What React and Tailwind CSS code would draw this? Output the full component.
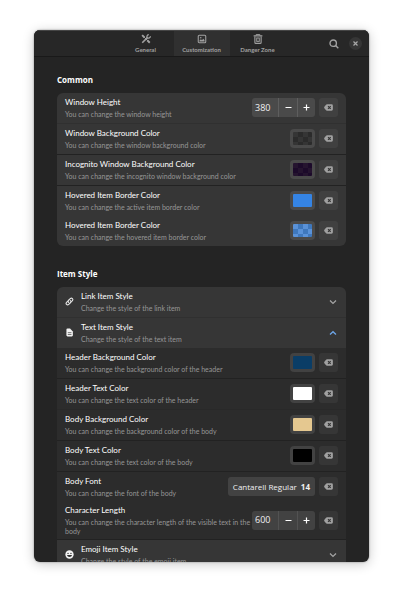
import React, { useState } from 'react';

const CHECKER_GRAY =
  'bg-[conic-gradient(#2b2b2b_25%,#353535_0_50%,#2b2b2b_0_75%,#353535_0)] bg-[length:10px_10px]';
const CHECKER_PURPLE =
  'bg-[conic-gradient(#1c0a2a_25%,#25142f_0_50%,#1c0a2a_0_75%,#25142f_0)] bg-[length:10px_10px]';
const CHECKER_BLUE =
  'bg-[conic-gradient(#3f78bd_25%,#5a92d8_0_50%,#3f78bd_0_75%,#5a92d8_0)] bg-[length:10px_10px]';

function ToolsIcon() {
  return (
    <svg width="10" height="10" viewBox="0 0 16 16" fill="none" stroke="#a0a0a0" aria-hidden="true">
      <path d="M1.8 1.8 L5.6 5.6 M10 10 L14 14" strokeWidth="3" />
      <path d="M5 5 L10.5 10.5" strokeWidth="1.6" />
      <path d="M2 14 L10.5 5.5" strokeWidth="2.6" />
      <path d="M12.4 0.9 C10 1.2 8.8 3.6 9.8 6.2 C12.4 7.2 14.8 6 15.1 3.6" strokeWidth="2" />
    </svg>
  );
}

function PictureIcon() {
  return (
    <svg width="10" height="10" viewBox="0 0 16 16" fill="none" stroke="#a0a0a0" aria-hidden="true">
      <rect x="2" y="2" width="12" height="12" rx="1.6" strokeWidth="1.7" />
      <path d="M4 12 V10.5 L6.2 8.4 L8 10 L10 7.6 L12 10 V12 Z" fill="#a0a0a0" stroke="none" />
      <circle cx="6" cy="5.8" r="1.2" fill="#a0a0a0" stroke="none" />
    </svg>
  );
}

function TrashIcon() {
  return (
    <svg width="10" height="10" viewBox="0 0 16 16" fill="none" stroke="#a0a0a0" aria-hidden="true">
      <path d="M1 3 H15" strokeWidth="2" />
      <path d="M5 2.6 V1 H11 V2.6" strokeWidth="1.6" />
      <path d="M3 4 V13.5 Q3 15 4.5 15 H11.5 Q13 15 13 13.5 V4" strokeWidth="1.8" />
      <rect x="6" y="6.4" width="4" height="5.4" strokeWidth="1.6" />
    </svg>
  );
}

function LinkIcon() {
  return (
    <svg width="9" height="9" viewBox="0 0 16 16" fill="none" stroke="#e4e4e4" strokeWidth="2" strokeLinecap="round" aria-hidden="true">
      <path d="M6.4 9.6 C5 8.2 5.4 6.8 6.4 5.8 L9.4 2.9 C10.6 1.7 12.2 1.8 13.2 2.8 C14.2 3.8 14.3 5.4 13.1 6.6 L11.6 8.1" />
      <path d="M9.6 6.4 C11 7.8 10.6 9.2 9.6 10.2 L6.6 13.1 C5.4 14.3 3.8 14.2 2.8 13.2 C1.8 12.2 1.7 10.6 2.9 9.4 L4.4 7.9" />
    </svg>
  );
}

function DocumentIcon() {
  return (
    <svg width="9" height="9" viewBox="0 0 16 16" aria-hidden="true">
      <path d="M2.5 3 Q2.5 1 4.5 1 H9 L14 6 V13 Q14 15 12 15 H4.5 Q2.5 15 2.5 13 Z" fill="#f2f2f2" />
      <path d="M5 8.3 H11.5 M5 11.6 H11.5" stroke="#363636" strokeWidth="1.2" />
    </svg>
  );
}

function SmileIcon() {
  return (
    <svg width="9" height="9" viewBox="0 0 16 16" aria-hidden="true">
      <circle cx="8" cy="8" r="7.4" fill="#f2f2f2" />
      <circle cx="5.4" cy="6" r="1.2" fill="#303030" />
      <circle cx="10.6" cy="6" r="1.2" fill="#303030" />
      <path d="M3.6 9 H12.4 C12 11.4 10.2 12.4 8 12.4 C5.8 12.4 4 11.4 3.6 9 Z" fill="#303030" />
    </svg>
  );
}

function Chevron({ open }) {
  return (
    <svg className="mr-px" width="8" height="8" viewBox="0 0 8 8" fill="none" strokeWidth="1.3" aria-hidden="true">
      {open ? (
        <path d="M1 5.5 L4 2.7 L7 5.5" stroke="#6ea6e8" />
      ) : (
        <path d="M1 2.6 L4 5.4 L7 2.6" stroke="#a4a4a4" />
      )}
    </svg>
  );
}

function ResetButton({ nested, label }) {
  return (
    <button
      type="button"
      aria-label={`Reset ${label}`}
      className={`flex size-[19px] shrink-0 items-center justify-center rounded-[3px] ${nested ? 'bg-[#363636]' : 'bg-[#404040]'}`}
    >
      <svg width="9" height="7" viewBox="0 0 18 14" aria-hidden="true">
        <path d="M6 0.5 H15 Q17.8 0.5 17.8 3.3 V10.7 Q17.8 13.5 15 13.5 H6 Q4.8 13.5 4 12.7 L0.8 8.6 Q-0.3 7 0.8 5.4 L4 1.3 Q4.8 0.5 6 0.5 Z" fill="#a0a0a0" />
        <path d="M8 4.2 L13.4 9.8 M13.4 4.2 L8 9.8" stroke="#333" strokeWidth="2.2" />
      </svg>
    </button>
  );
}

function Swatch({ color, nested, label }) {
  return (
    <button
      type="button"
      aria-label={label}
      className={`flex h-[19px] w-[25px] shrink-0 items-center justify-center rounded-[4px] ${nested ? 'bg-[#424242]' : 'bg-[#4a4a4a]'}`}
    >
      <span className={`block h-[13px] w-[19px] rounded-[1px] ${color}`} />
    </button>
  );
}

function SpinButton({ initial, step, nested, label }) {
  const [value, setValue] = useState(initial);
  const line = nested ? 'border-[#525252]' : 'border-[#5e5e5e]';
  return (
    <div className={`flex h-[19px] shrink-0 overflow-hidden rounded-[3px] text-[#f0f0f0] ${nested ? 'bg-[#424242]' : 'bg-[#4a4a4a]'}`}>
      <input
        aria-label={label}
        value={value}
        onChange={(e) => setValue(Number(e.target.value) || 0)}
        className="w-[26px] bg-transparent pl-[3px] text-[9px] outline-none"
      />
      <button type="button" aria-label="Decrease" onClick={() => setValue(value - step)} className={`flex w-[19px] items-center justify-center border-l ${line}`}>
        <svg width="7" height="7" viewBox="0 0 7 7" stroke="#fff" strokeWidth="1.2" aria-hidden="true">
          <path d="M0.5 3.5 H6.5" />
        </svg>
      </button>
      <button type="button" aria-label="Increase" onClick={() => setValue(value + step)} className={`flex w-[18px] items-center justify-center border-l ${line}`}>
        <svg width="7" height="7" viewBox="0 0 7 7" stroke="#fff" strokeWidth="1.2" aria-hidden="true">
          <path d="M0.5 3.5 H6.5 M3.5 0.5 V6.5" />
        </svg>
      </button>
    </div>
  );
}

function RowText({ title, subtitle }) {
  return (
    <span className="block min-w-0 flex-1 text-left font-['Lato',sans-serif]">
      <span className="block text-[8px] leading-[12px] text-white">{title}</span>
      <span className="mt-[2px] block text-[7px] leading-[9px] text-[#969696]">{subtitle}</span>
    </span>
  );
}

const DIVIDERS = {
  strong: 'border-b border-[#222222]',
  soft: 'border-b border-[#303030]',
  faint: 'border-b border-[#292929]',
};

function SettingRow({ title, subtitle, nested, divider, compact, children }) {
  return (
    <li className={`flex items-center px-2 pt-[3px] ${compact ? 'pb-[3px]' : 'pb-[4px]'} ${nested ? 'bg-[#2c2c2c]' : 'bg-[#363636]'} ${divider ? DIVIDERS[divider] : ''}`}>
      <RowText title={title} subtitle={subtitle} />
      <div className="flex gap-1">
        {children}
        <ResetButton nested={nested} label={title} />
      </div>
    </li>
  );
}

function ExpanderRow({ icon, title, subtitle, open, divider }) {
  return (
    <li className={`bg-[#363636] ${divider ? DIVIDERS[divider] : ''}`}>
      <button type="button" aria-expanded={open} className="flex w-full items-center gap-[7px] px-2 pt-[3px] pb-[4px]">
        {icon}
        <RowText title={title} subtitle={subtitle} />
        <Chevron open={open} />
      </button>
    </li>
  );
}

function Tab({ icon, label, active }) {
  return (
    <button
      type="button"
      role="tab"
      aria-selected={active}
      className={`flex w-14 flex-col items-center gap-px pt-[3px] text-[#a0a0a0] ${active ? 'bg-[#303030]' : ''}`}
    >
      {icon}
      <span className="font-['Lato',sans-serif] text-[6px] leading-[9px] font-bold whitespace-nowrap">{label}</span>
    </button>
  );
}

function Heading({ children }) {
  return <h2 className="mb-[7px] text-[8px] leading-[12px] font-bold text-white">{children}</h2>;
}

export default function App() {
  return (
    <div className="flex h-screen flex-col bg-white px-[34px] pt-[30px] pb-[38px] font-['Open_Sans',sans-serif]">
      <main className="flex min-h-0 flex-1 flex-col overflow-hidden rounded-[6px] bg-[#242424] shadow-[0_2px_12px_rgba(0,0,0,0.22),0_0_2px_rgba(0,0,0,0.4)]">
        <header className="grid h-[27px] shrink-0 grid-cols-[1fr_auto_1fr] border-t border-b border-t-[#454545] border-b-[#191919] bg-[#272727]">
          <span />
          <div role="tablist" className="flex">
            <Tab icon={<ToolsIcon />} label="General" />
            <Tab icon={<PictureIcon />} label="Customization" active />
            <Tab icon={<TrashIcon />} label="Danger Zone" />
          </div>
          <div className="flex items-center justify-end gap-[10px] pr-[7px]">
            <button type="button" aria-label="Search">
              <svg width="10" height="10" viewBox="0 0 10 10" fill="none" stroke="#a0a0a0" strokeWidth="1.4" aria-hidden="true">
                <circle cx="4.2" cy="4.2" r="3.2" />
                <path d="M6.6 6.6 L9.3 9.3" />
              </svg>
            </button>
            <button type="button" aria-label="Close" className="flex size-[13px] items-center justify-center rounded-full bg-[#363636]">
              <svg width="5" height="5" viewBox="0 0 5 5" stroke="#a8a8a8" strokeWidth="1.2" aria-hidden="true">
                <path d="M0.5 0.5 L4.5 4.5 M4.5 0.5 L0.5 4.5" />
              </svg>
            </button>
          </div>
        </header>

        <div className="min-h-0 flex-1 overflow-hidden px-[23px] pt-[17px]">
          <section>
            <Heading>Common</Heading>
            <ul className="overflow-hidden rounded-[6px]">
              <SettingRow title="Window Height" subtitle="You can change the window height" divider="soft">
                <SpinButton initial={380} step={10} label="Window Height" />
              </SettingRow>
              <SettingRow title="Window Background Color" subtitle="You can change the window background color" divider="strong">
                <Swatch color={CHECKER_GRAY} label="Window Background Color" />
              </SettingRow>
              <SettingRow title="Incognito Window Background Color" subtitle="You can change the incognito window background color" divider="strong">
                <Swatch color={CHECKER_PURPLE} label="Incognito Window Background Color" />
              </SettingRow>
              <SettingRow title="Hovered Item Border Color" subtitle="You can change the active item border color">
                <Swatch color="bg-[#3584e4]" label="Active Item Border Color" />
              </SettingRow>
              <SettingRow title="Hovered Item Border Color" subtitle="You can change the hovered item border color">
                <Swatch color={CHECKER_BLUE} label="Hovered Item Border Color" />
              </SettingRow>
            </ul>
          </section>

          <section className="mt-[22px]">
            <Heading>Item Style</Heading>
            <ul className="overflow-hidden rounded-[6px]">
              <ExpanderRow icon={<LinkIcon />} title="Link Item Style" subtitle="Change the style of the link item" open={false} divider="soft" />
              <ExpanderRow icon={<DocumentIcon />} title="Text Item Style" subtitle="Change the style of the text item" open />
              <SettingRow nested title="Header Background Color" subtitle="You can change the background color of the header" divider="strong">
                <Swatch nested color="bg-[#0a3d66]" label="Header Background Color" />
              </SettingRow>
              <SettingRow nested title="Header Text Color" subtitle="You can change the text color of the header" divider="faint">
                <Swatch nested color="bg-white" label="Header Text Color" />
              </SettingRow>
              <SettingRow nested title="Body Background Color" subtitle="You can change the background color of the body" divider="strong">
                <Swatch nested color="bg-[#e5c890]" label="Body Background Color" />
              </SettingRow>
              <SettingRow nested title="Body Text Color" subtitle="You can change the text color of the body" divider="strong">
                <Swatch nested color="bg-black" label="Body Text Color" />
              </SettingRow>
              <SettingRow nested compact title="Body Font" subtitle="You can change the font of the body">
                <button type="button" className="flex h-[19px] shrink-0 items-center gap-[4px] rounded-[3px] bg-[#424242] px-[5px] text-[8px] text-[#f0f0f0]">
                  <span>Cantarell Regular</span>
                  <span className="font-bold">14</span>
                </button>
              </SettingRow>
              <SettingRow nested compact title="Character Length" subtitle="You can change the character length of the visible text in the body" divider="strong">
                <SpinButton nested initial={600} step={10} label="Character Length" />
              </SettingRow>
              <ExpanderRow icon={<SmileIcon />} title="Emoji Item Style" subtitle="Change the style of the emoji item" open={false} />
            </ul>
          </section>
        </div>
      </main>
    </div>
  );
}
